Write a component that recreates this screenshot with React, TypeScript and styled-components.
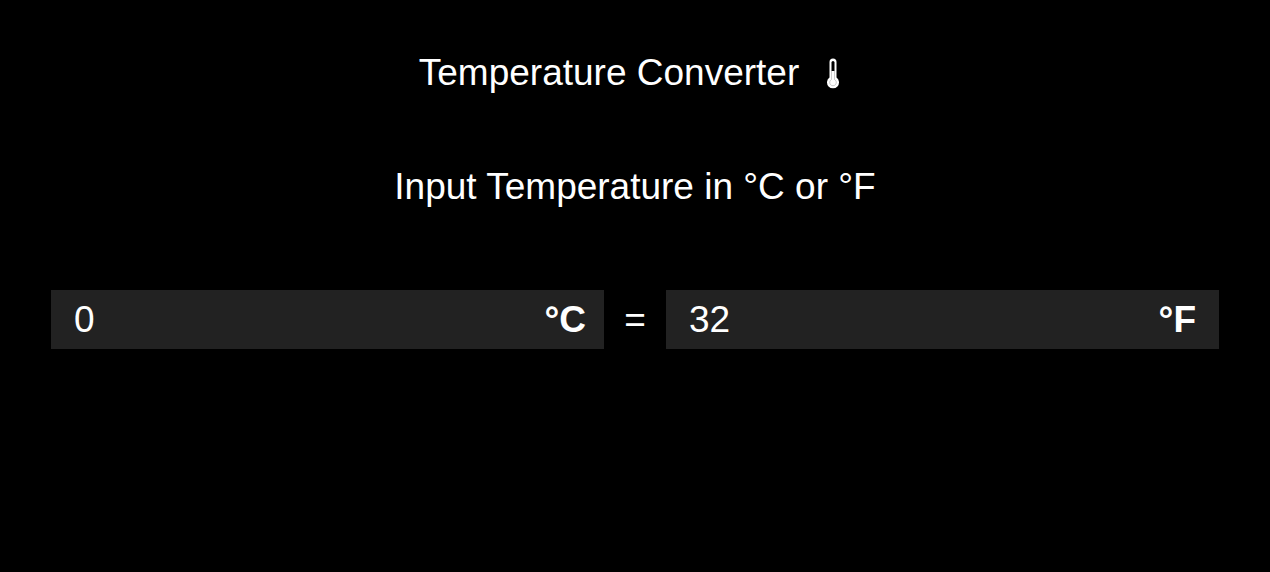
import { useState } from "react";
import styled, { createGlobalStyle } from "styled-components";

const GlobalStyle = createGlobalStyle`
  *, *::before, *::after { box-sizing: border-box; }
  body {
    margin: 0;
    background: #000;
    color: #fff;
    font-family: "Liberation Sans", Arial, sans-serif;
    font-size: 37px;
    line-height: 44px;
  }
`;

const Page = styled.main`
  padding: 51px;
`;

const Title = styled.h1`
  display: flex;
  align-items: center;
  justify-content: center;
  gap: 16px;
  margin: 0 0 70px;
  font-size: inherit;
  font-weight: 400;
`;

const Prompt = styled.p`
  margin: 0 0 81px;
  text-align: center;
`;

const Converter = styled.form`
  display: grid;
  grid-template-columns: minmax(0, 1fr) 62px minmax(0, 1fr);
  align-items: baseline;
`;

const Field = styled.label<{ $end: number }>`
  display: flex;
  align-items: center;
  padding: 8px ${(p) => p.$end}px 7px 23px;
  background: #222;
`;

const Value = styled.input`
  flex: 1;
  min-width: 0;
  height: 44px;
  padding: 0;
  border: 0;
  outline: 0;
  background: transparent;
  color: inherit;
  font: inherit;
`;

const Unit = styled.span`
  font-weight: 700;
`;

const Equals = styled.span`
  text-align: center;
`;

const Thermometer = () => (
  <svg width="36" height="36" viewBox="0 0 36 36" aria-hidden="true">
    <path
      d="M14.500 22.500V7a3.500 3.500 0 0 1 7 0v15.500a6 6 0 1 1-7 0Z"
      fill="#fff"
    />
    <path d="M16.500 7.500a1.500 1.500 0 0 1 3 0V16h-3Z" fill="#000" />
    <path
      d="M16.500 16v8.500a3.300 3.300 0 1 0 3 0V16"
      fill="none"
      stroke="#999"
      strokeWidth="0.5"
    />
  </svg>
);

const format = (n: number) => String(Math.round(n * 100) / 100);

export default function App() {
  const [celsius, setCelsius] = useState("0");
  const [fahrenheit, setFahrenheit] = useState("32");

  const changeCelsius = (text: string) => {
    setCelsius(text);
    setFahrenheit(text === "" || isNaN(+text) ? "" : format(+text * 1.8 + 32));
  };
  const changeFahrenheit = (text: string) => {
    setFahrenheit(text);
    setCelsius(text === "" || isNaN(+text) ? "" : format((+text - 32) / 1.8));
  };

  return (
    <>
      <GlobalStyle />
      <Page>
        <Title>
          Temperature Converter
          <Thermometer />
        </Title>
        <Prompt>Input Temperature in °C or °F</Prompt>
        <Converter onSubmit={(e) => e.preventDefault()}>
          <Field $end={18}>
            <Value value={celsius} onChange={(e) => changeCelsius(e.target.value)} />
            <Unit>°C</Unit>
          </Field>
          <Equals>=</Equals>
          <Field $end={23}>
            <Value value={fahrenheit} onChange={(e) => changeFahrenheit(e.target.value)} />
            <Unit>°F</Unit>
          </Field>
        </Converter>
      </Page>
    </>
  );
}
